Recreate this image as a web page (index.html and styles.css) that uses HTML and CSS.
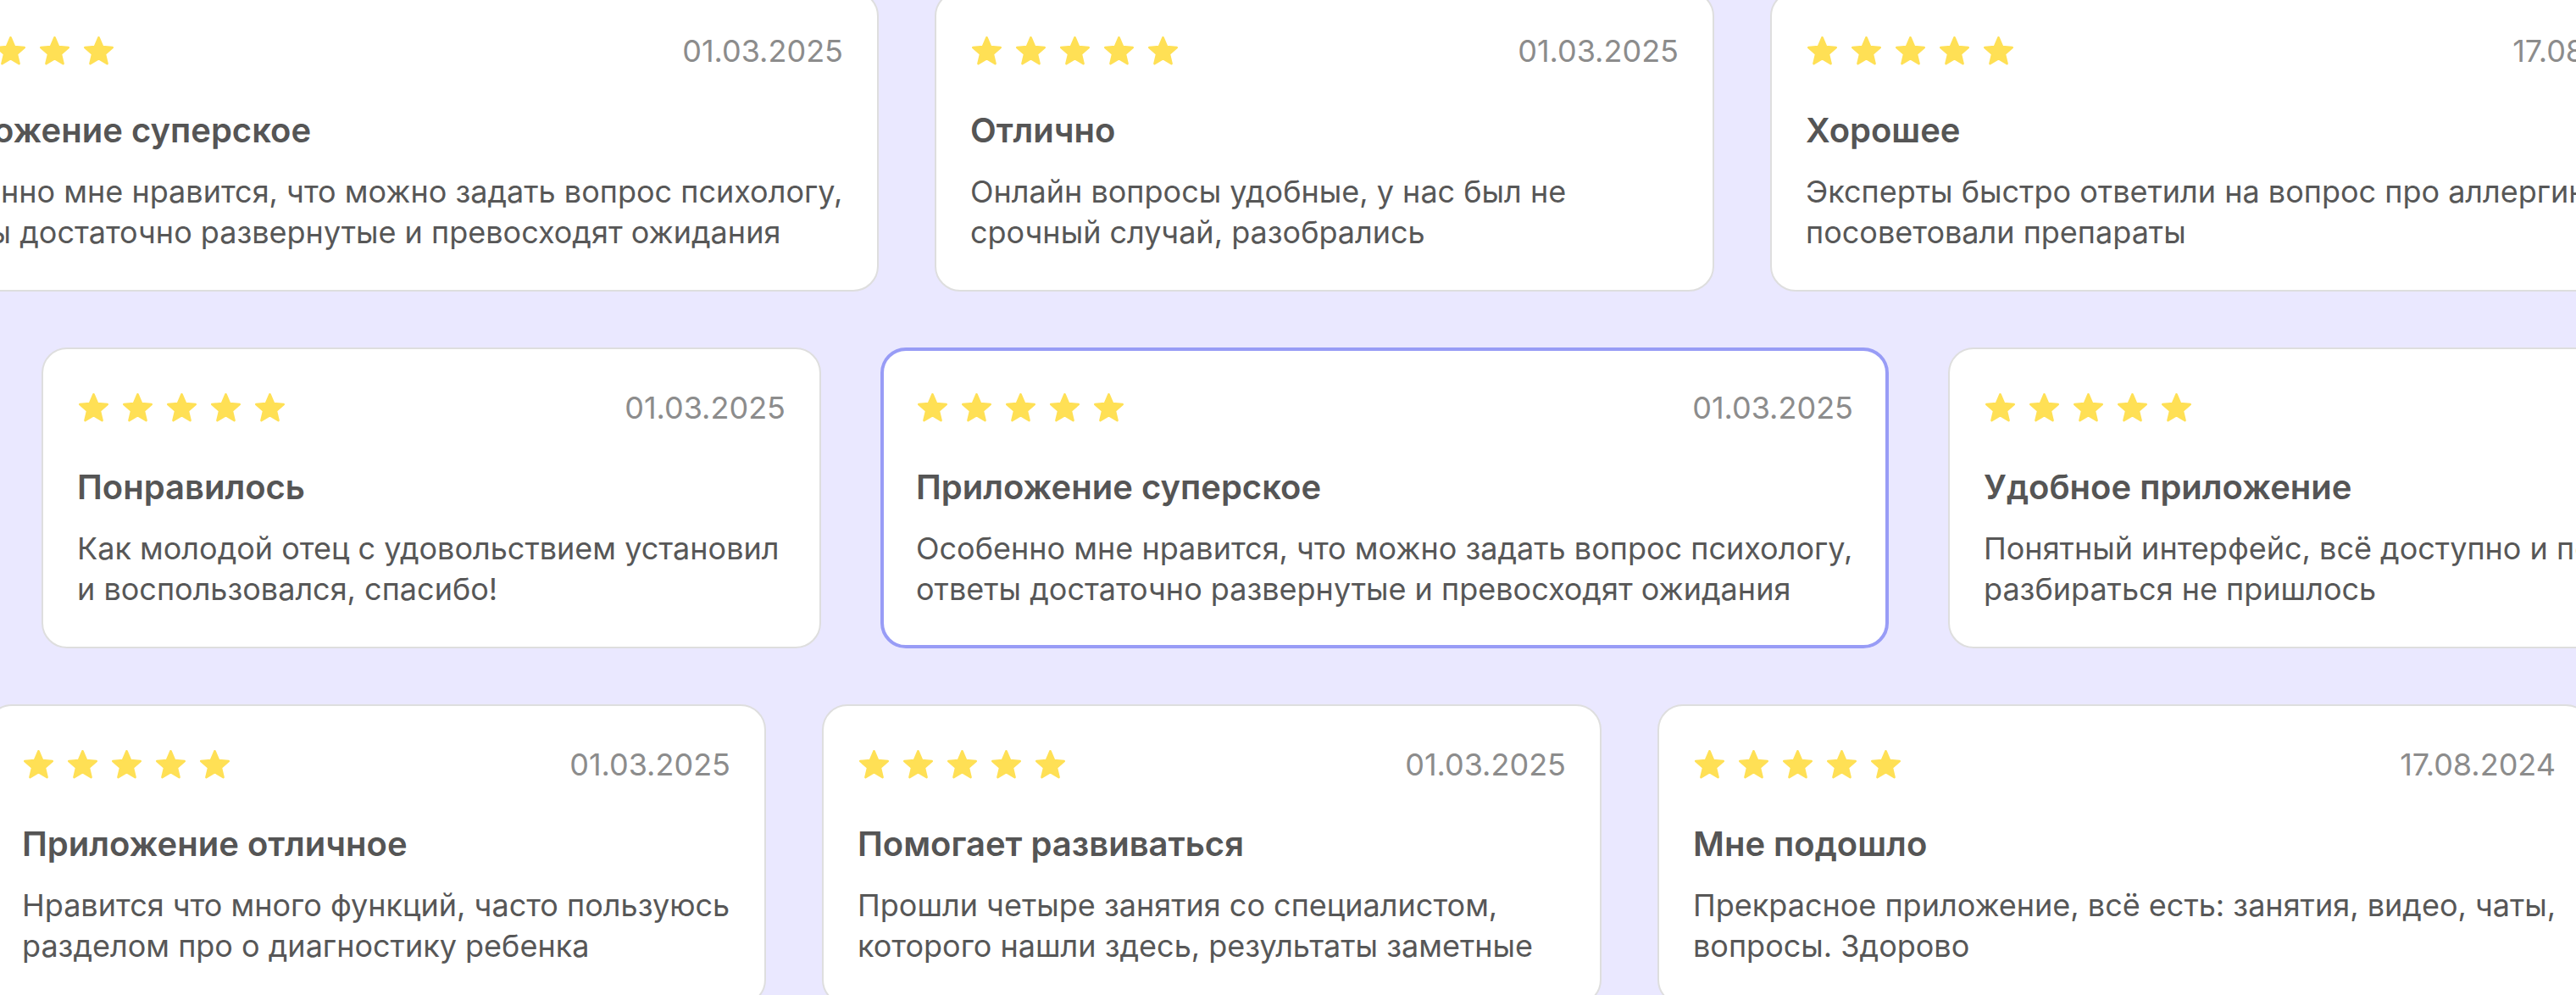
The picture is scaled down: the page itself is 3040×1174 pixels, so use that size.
FILE: index.html
```html
<!DOCTYPE html>
<html lang="ru">
<head>
	<meta charset="utf-8">
	<meta name="viewport" content="width=device-width, initial-scale=1">
	<title>Отзывы</title>
	<link rel="stylesheet" href="styles.css">
</head>
<body>
	<svg class="defs" width="0" height="0" aria-hidden="true">
		<symbol id="star" viewBox="0 0 24 24">
			<path d="M12 17.27L18.18 21l-1.64-7.03L22 9.24l-7.19-.61L12 2 9.19 8.63 2 9.24l5.46 4.73L5.82 21z"/>
		</symbol>
	</svg>

	<main class="reviews">
		<div class="row row1">
			<div class="card card-wide">
				<div class="head">
					<div class="stars"><svg><use href="#star"/></svg><svg><use href="#star"/></svg><svg><use href="#star"/></svg><svg><use href="#star"/></svg><svg><use href="#star"/></svg></div>
					<span class="date">01.03.2025</span>
				</div>
				<div class="title">Приложение суперское</div>
				<p class="text">Особенно мне нравится, что можно задать вопрос психологу, ответы достаточно развернутые и превосходят ожидания</p>
			</div>
			<div class="card">
				<div class="head">
					<div class="stars"><svg><use href="#star"/></svg><svg><use href="#star"/></svg><svg><use href="#star"/></svg><svg><use href="#star"/></svg><svg><use href="#star"/></svg></div>
					<span class="date">01.03.2025</span>
				</div>
				<div class="title">Отлично</div>
				<p class="text">Онлайн вопросы удобные, у нас был не срочный случай, разобрались</p>
			</div>
			<div class="card card-mid">
				<div class="head">
					<div class="stars"><svg><use href="#star"/></svg><svg><use href="#star"/></svg><svg><use href="#star"/></svg><svg><use href="#star"/></svg><svg><use href="#star"/></svg></div>
					<span class="date">17.08.2024</span>
				</div>
				<div class="title">Хорошее</div>
				<p class="text">Эксперты быстро ответили на вопрос про аллергию и посоветовали препараты</p>
			</div>
		</div>

		<div class="row row2">
			<div class="card">
				<div class="head">
					<div class="stars"><svg><use href="#star"/></svg><svg><use href="#star"/></svg><svg><use href="#star"/></svg><svg><use href="#star"/></svg><svg><use href="#star"/></svg></div>
					<span class="date">01.03.2025</span>
				</div>
				<div class="title">Понравилось</div>
				<p class="text">Как молодой отец с удовольствием установил и воспользовался, спасибо!</p>
			</div>
			<div class="card card-wide card-active">
				<div class="head">
					<div class="stars"><svg><use href="#star"/></svg><svg><use href="#star"/></svg><svg><use href="#star"/></svg><svg><use href="#star"/></svg><svg><use href="#star"/></svg></div>
					<span class="date">01.03.2025</span>
				</div>
				<div class="title">Приложение суперское</div>
				<p class="text">Особенно мне нравится, что можно задать вопрос психологу, ответы достаточно развернутые и превосходят ожидания</p>
			</div>
			<div class="card card-mid">
				<div class="head">
					<div class="stars"><svg><use href="#star"/></svg><svg><use href="#star"/></svg><svg><use href="#star"/></svg><svg><use href="#star"/></svg><svg><use href="#star"/></svg></div>
					<span class="date">01.03.2025</span>
				</div>
				<div class="title">Удобное приложение</div>
				<p class="text">Понятный интерфейс, всё доступно и понятно, долго разбираться не пришлось</p>
			</div>
		</div>

		<div class="row row3">
			<div class="card">
				<div class="head">
					<div class="stars"><svg><use href="#star"/></svg><svg><use href="#star"/></svg><svg><use href="#star"/></svg><svg><use href="#star"/></svg><svg><use href="#star"/></svg></div>
					<span class="date">01.03.2025</span>
				</div>
				<div class="title">Приложение отличное</div>
				<p class="text">Нравится что много функций, часто пользуюсь разделом про о диагностику ребенка</p>
			</div>
			<div class="card">
				<div class="head">
					<div class="stars"><svg><use href="#star"/></svg><svg><use href="#star"/></svg><svg><use href="#star"/></svg><svg><use href="#star"/></svg><svg><use href="#star"/></svg></div>
					<span class="date">01.03.2025</span>
				</div>
				<div class="title">Помогает развиваться</div>
				<p class="text">Прошли четыре занятия со специалистом, которого нашли здесь, результаты заметные</p>
			</div>
			<div class="card card-mid">
				<div class="head">
					<div class="stars"><svg><use href="#star"/></svg><svg><use href="#star"/></svg><svg><use href="#star"/></svg><svg><use href="#star"/></svg><svg><use href="#star"/></svg></div>
					<span class="date">17.08.2024</span>
				</div>
				<div class="title">Мне подошло</div>
				<p class="text">Прекрасное приложение, всё есть: занятия, видео, чаты, вопросы. Здорово</p>
			</div>
		</div>
	</main>
</body>
</html>
```

FILE: styles.css
```css
html, body {
	margin: 0;
	height: 100%;
}
body {
	background-color: #eae8ff;
	font-family: Inter, "Noto Sans", sans-serif;
	color: #575757;
	overflow: hidden;
}
.defs {
	position: absolute;
}

.reviews {
	display: flex;
	flex-direction: column;
	gap: 66px;
	margin-top: -11px;
}
.row {
	display: flex;
	gap: 66px;
}
/* marquee offsets of each track */
.row1 { margin-left: -153px; }
.row2 { margin-left: 49px; }
.row3 { margin-left: -16px; }

.card {
	flex: none;
	box-sizing: border-box;
	width: 920px;
	padding: 49px 40px 44px;
	background-color: #fff;
	border: 2px solid #dedede;
	border-radius: 30px;
}
.card-wide {
	width: 1190px;
}
.card-mid {
	width: 1102px;
}
.card-active {
	border: 4px solid #989cf6;
	padding: 47px 38px 42px;
	margin: 0 4px;
}

.head {
	display: flex;
	align-items: center;
	justify-content: space-between;
	height: 40px;
}
.stars {
	display: flex;
	gap: 13px;
}
.stars svg {
	width: 39px;
	height: 39px;
	fill: #ffe055;
	stroke: #ffe055;
	stroke-width: 1.6;
	stroke-linejoin: round;
}
.date {
	font-size: 36px;
	line-height: 40px;
	color: #8c8c8c;
}
.title {
	margin-top: 50px;
	font-size: 40px;
	line-height: 48px;
	font-weight: 600;
	color: #555;
}
.text {
	margin: 24px -12px 0 0;
	font-size: 36px;
	line-height: 48px;
}
```
